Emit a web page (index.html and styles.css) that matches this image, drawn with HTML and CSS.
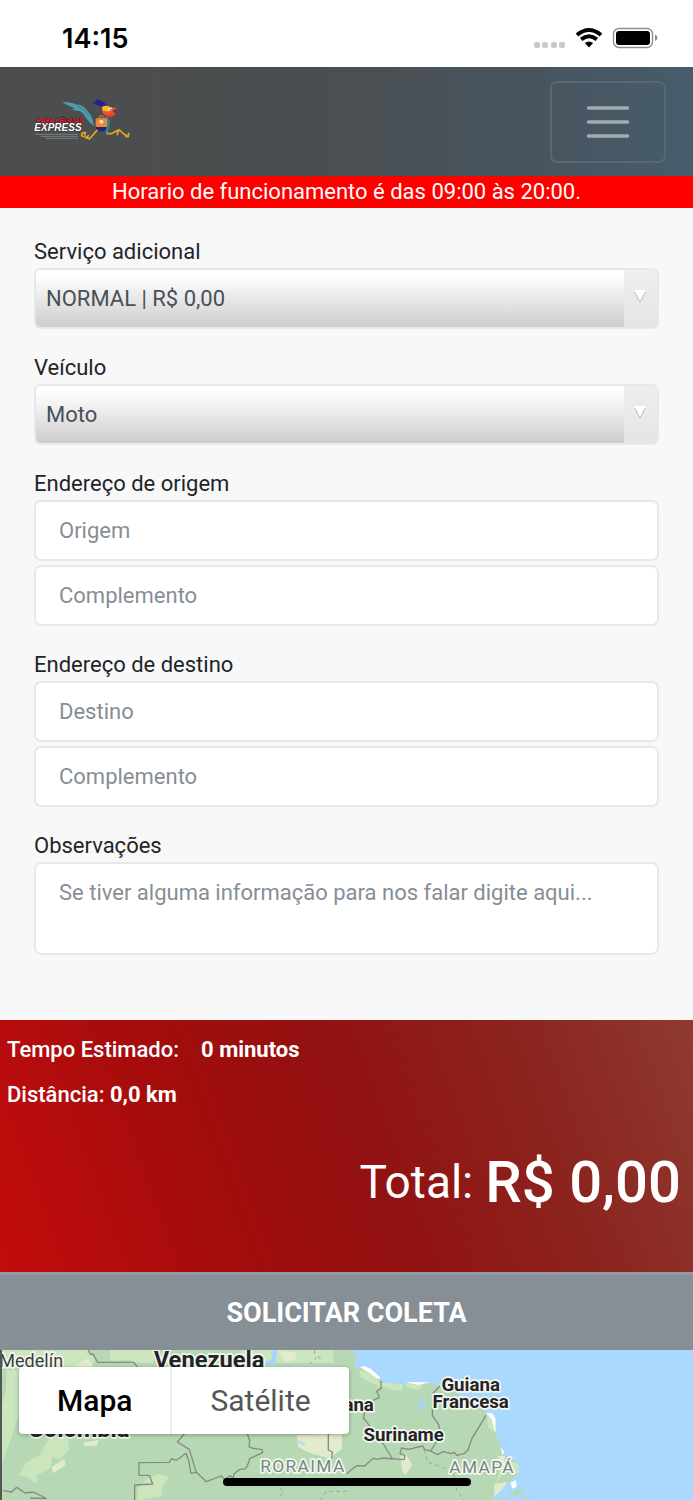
FILE: index.html
```html
<!DOCTYPE html>
<html lang="pt-BR">
<head>
<meta charset="utf-8">
<meta name="viewport" content="width=device-width, initial-scale=1">
<title>Papa Léguas Express</title>
<link rel="stylesheet" href="styles.css">
</head>
<body>
<div class="status">
  <span class="status-time">14:15</span>
  <svg class="status-icons" width="126" height="24" viewBox="0 0 126 24" aria-hidden="true">
    <g fill="#c9c9c9"><rect x="1" y="15" width="6" height="6" rx="2"/><rect x="9" y="15" width="6" height="6" rx="2"/><rect x="18" y="15" width="6" height="6" rx="2"/><rect x="26" y="15" width="6" height="6" rx="2"/></g>
    <g fill="none" stroke="#000" stroke-width="4"><path d="M44 8Q56 -2 68 8"/><path d="M48.200 12.400Q56 6 63.800 12.400"/></g>
    <path d="M51.800 16Q56 12.800 60.200 16L56 20.600Z"/>
    <rect x="80.500" y="1.500" width="39" height="19" rx="5.500" fill="none" stroke="#8e8e8e" stroke-width="1.400"/>
    <rect x="83" y="4" width="34" height="14" rx="3"/>
    <path d="M122 7.500q2.400 1 2.400 3.300t-2.400 3.300z" fill="#8e8e8e"/>
  </svg>
</div>

<header class="navbar">
  <a class="brand" href="#" aria-label="Papa Léguas Express">
    <svg width="100" height="46" viewBox="0 0 300 138">
      <path d="M84 9Q110 8 124 16Q149 17 160 36Q176 50 180 82Q166 71 156 57Q149 42 137 36Q122 37 114 30L124 28Q107 23 84 9Z" fill="#4c9dab"/>
      <path d="M128 19Q149 27 164 50" fill="none" stroke="#347987" stroke-width="3"/>
      <path d="M172 9Q183 11 188 7Q180 1 193 2Q204 3 213 13Q220 17 218 25L207 22Q198 25 191 18Q182 16 172 9Z" fill="#29208a"/>
      <path d="M217 52Q229 57 228 74L222 96L213 96Q220 75 211 55Z" fill="#367f91"/>
      <path d="M204 24Q216 16 229 25L250 27L235 35L244 46L234 53Q215 53 205 41Z" fill="#ee542a"/>
      <path d="M205 23Q218 16 231 25L236 30L223 38L205 34Z" fill="#f5b62a"/>
      <ellipse cx="228" cy="30" rx="6" ry="4" fill="#eee"/><circle cx="230" cy="31" r="2" fill="#222"/>
      <path d="M206 41L220 49L239 46L234 55L218 53Z" fill="#e53720"/>
      <path d="M186 80Q197 87 218 81L215 94Q198 102 186 90Z" fill="#272078"/>
      <path d="M196 59v-7q6-5 11 0v7" fill="none" stroke="#ef8534" stroke-width="3"/>
      <rect x="185" y="58" width="34" height="26" rx="3" fill="#ef8534"/>
      <circle cx="202" cy="68" r="6" fill="#f8e8df"/><path d="M199 70l6-5" stroke="#ef8534" stroke-width="2"/>
      <g fill="none" stroke="#dca923" stroke-width="5" stroke-linecap="round" stroke-linejoin="round"><path d="M189 94L166 120L155 114M155 101Q141 98 143 110L150 113M150 103L154 108M163 110L157 118"/><path d="M219 104L232 104L255 92L268 104L283 113L284 103M283 113L275 112M253 94L250 107"/></g>
      <path d="M216 97l8 7" stroke="#439eac" stroke-width="5"/>
      <text class="logo-top" x="7" y="71">PAPA LÉGUAS</text>
      <text class="logo-bottom" x="1" y="97">EXPRESS</text>
      <path d="M4 106H132M20 112H132M35 118H132" fill="none" stroke="#708086" stroke-width="3"/>
    </svg>
  </a>
  <button class="menu-button" type="button" aria-label="Abrir menu">
    <svg width="44" height="34" viewBox="0 0 44 34"><path d="M2.500 3H41.500M2.500 17H41.500M2.500 31H41.500" stroke="#a3abb2" stroke-width="3.600" stroke-linecap="round"/></svg>
  </button>
</header>

<p class="notice">Horario de funcionamento é das 09:00 às 20:00.</p>

<main>
  <form class="order-form">
    <div class="group">
      <label for="service">Serviço adicional</label>
      <div class="select-box">
        <select id="service"><option>NORMAL | R$ 0,00</option></select>
        <span class="arrow"><svg width="14" height="14" viewBox="0 0 14 14"><path d="M1 2H13L7 13Z" fill="#bdbdbd"/><path d="M1 0H13L7 11Z" fill="#fff"/></svg></span>
      </div>
    </div>
    <div class="group">
      <label for="vehicle">Veículo</label>
      <div class="select-box">
        <select id="vehicle"><option>Moto</option></select>
        <span class="arrow"><svg width="14" height="14" viewBox="0 0 14 14"><path d="M1 2H13L7 13Z" fill="#bdbdbd"/><path d="M1 0H13L7 11Z" fill="#fff"/></svg></span>
      </div>
    </div>
    <div class="group">
      <label for="origin">Endereço de origem</label>
      <div class="fields">
        <input id="origin" type="text" placeholder="Origem">
        <input type="text" placeholder="Complemento" aria-label="Complemento da origem">
      </div>
    </div>
    <div class="group">
      <label for="destination">Endereço de destino</label>
      <div class="fields">
        <input id="destination" type="text" placeholder="Destino">
        <input type="text" placeholder="Complemento" aria-label="Complemento do destino">
      </div>
    </div>
    <div class="group">
      <label for="notes">Observações</label>
      <textarea id="notes" placeholder="Se tiver alguma informação para nos falar digite aqui..."></textarea>
    </div>
  </form>

  <section class="summary">
    <p class="summary-line"><span class="summary-time">Tempo Estimado:</span><strong>0 minutos</strong></p>
    <p class="summary-line">Distância: <strong>0,0 km</strong></p>
    <p class="total"><span>Total:</span><strong>R$ 0,00</strong></p>
  </section>
  <button class="submit" type="button">SOLICITAR COLETA</button>

  <section class="map" aria-label="Mapa">
    <svg class="map-art" viewBox="0 0 2079 450" preserveAspectRatio="xMinYMin slice">
      <rect width="2079" height="450" fill="#a9d9ff"/>
      <path fill="#b7d8b5" d="M0 0H1061L1067 20L1063 54L1090 50L1132 84L1145 96L1220 104L1280 96L1330 110L1400 145L1440 175L1462 190L1485 210L1486 246L1502 290L1516 318L1556 340L1555 370L1530 394L1508 410L1480 442V450H0Z"/>
      <g fill="#cbe6bd">
        <path d="M0 0H260L285 28L270 50H0ZM20 60H58V190L35 260L8 335L0 350V190L18 120ZM145 270L202 250L208 296L180 328L158 320L150 354L110 377L112 403L80 381L56 375L78 338L118 316ZM440 388L475 372L507 381L488 410L484 440L411 450L415 412ZM1130 97L1210 103L1207 122L1176 121L1155 110L1130 110ZM1220 98L1275 96L1255 121L1218 112ZM1079 60L1110 68L1138 92L1125 104L1100 92L1080 80ZM1460 190L1480 208L1488 248L1465 232ZM1508 332L1556 340L1555 372L1515 360L1487 403ZM330 0H460V38H405L391 30L330 32ZM720 0H1000V38H740Z"/>
      </g>
      <g fill="#e3ebcd">
        <path d="M240 38L264 25L280 50H218ZM155 352L193 326L196 346L160 370ZM250 278L296 270L290 287L255 287ZM890 256L1026 252V296L990 325L932 310L895 292ZM835 3L892 8L884 31L855 36ZM1200 321L1216 310L1236 344L1230 356L1215 375L1208 365ZM1495 318L1516 318L1507 367L1495 350ZM1483 402L1522 396L1502 424L1483 438Z"/>
      </g>
      <path d="M1080 52L1092 48L1112 56L1142 84L1132 86L1108 68ZM1218 97L1290 97L1255 104ZM1458 188L1477 190L1487 208L1486 250L1475 208ZM1502 290L1512 306L1508 318ZM1532 398L1548 390L1550 410L1536 416Z" fill="#fff"/>
      <g fill="#b7d8b5"><path d="M1528 427L1550 419L1576 424L1568 435L1532 437ZM1563 442L1590 435L1583 446ZM1490 447L1518 439L1515 450Z"/></g>
      <g fill="#a3d6ff"><path d="M813 2L832 0L826 42L805 46L797 37L816 27ZM890 268L908 278L922 288L909 284L894 274ZM285 397L303 414L295 408ZM210 416L234 436L222 430ZM1260 151L1275 157L1270 172L1259 170L1255 185L1250 181ZM0 188l10 7l-10 8ZM240 424l16 22l-12-12Z"/></g>
      <g fill="none" stroke="#858b84" stroke-width="4" stroke-linejoin="round">
        <path d="M265 0L271 13L279 12L293 37L402 37L414 54M555 250L532 276L568 298L588 365L619 395L663 378L675 388L690 377L700 384L702 371L720 358L734 357L741 350L750 325L788 308L786 299L755 294L747 290L749 271L741 250M10 422L35 426L50 412L75 429L100 426L140 446M90 444L138 446M404 450V405L458 402L448 376H417V338L508 337L514 326L529 331L558 310L566 331L573 370L588 367M985 250V300L997 306L995 326"/>
        <path d="M1143 92L1143 116L1130 124L1138 142L1120 151L1095 183L1090 203L1112 232L1150 282L1178 327L1150 324L1130 328L1120 325L1108 335L1094 348L1072 347L1063 352L1040 371M1320 108L1299 130L1297 196L1316 224L1322 255L1292 303L1274 299L1268 288L1225 298L1205 294L1200 311L1215 316L1212 329L1150 324M1292 303L1312 314L1330 305L1354 311L1364 307L1370 316L1392 311L1404 300L1416 265L1458 196"/>
      </g>
      <g fill="none" stroke="#9da9a0" stroke-width="3" stroke-dasharray="12 9"><path d="M943 0L948 25L930 42M955 18L962 30M1041 424H978L962 450M1272 299L1283 337L1310 346L1342 358M1360 370L1370 420L1391 450M840 412l10 14l-10 12"/></g>
      <g class="map-country">
        <text class="map-large" x="461" y="53">Venezuela</text>
        <text class="map-large" x="85" y="262">Colombia</text>
        <text x="946" y="183">Guiana</text>
        <text x="1412" y="123" text-anchor="middle">Guiana</text>
        <text x="1412" y="174" text-anchor="middle">Francesa</text>
        <text x="1211" y="273" text-anchor="middle">Suriname</text>
      </g>
      <text class="map-city" x="-2" y="50">Medelín</text>
      <g class="map-state"><text x="781" y="366">RORAIMA</text><text x="1348" y="370">AMAPÁ</text></g>
      <path d="M0 0H6V450H0Z" fill="#555"/>
    </svg>
    <div class="map-switch">
      <button class="map-type map-type-active" type="button">Mapa</button>
      <button class="map-type" type="button">Satélite</button>
    </div>
    <span class="home-indicator"></span>
  </section>
</main>
</body>
</html>
```

FILE: styles.css
```css
* { box-sizing: border-box; }

body {
  margin: 0;
  min-height: 100vh;
  display: flex;
  flex-direction: column;
  background: #f8f8f8;
  color: #212529;
  font-family: Roboto, sans-serif;
  font-size: 22px;
  line-height: 32px;
}

p { margin: 0; }

button, input, select, textarea { font: inherit; }

.status {
  display: flex;
  align-items: center;
  justify-content: space-between;
  height: 67px;
  padding: 10px 34px 0 62px;
  background: #fff;
}

.status-time {
  color: #000;
  font-family: Inter, sans-serif;
  font-size: 27px;
  font-weight: 600;
}

.navbar {
  display: flex;
  align-items: center;
  justify-content: space-between;
  height: 109px;
  padding: 0 27px 0 34px;
  background: linear-gradient(to right, #4d4d4d, #4a4e50 45%, #48535c 72%, #475c6b);
}

.brand { display: flex; }

.logo-top, .logo-bottom {
  font-family: "Liberation Sans", sans-serif;
  font-style: italic;
  font-weight: 700;
  paint-order: stroke;
  stroke: #151515;
  stroke-width: 2px;
}

.logo-top { font-size: 20px; fill: #f02430; }
.logo-bottom { font-size: 30px; fill: #fff; }

.menu-button {
  display: flex;
  align-items: center;
  justify-content: center;
  width: 116px;
  height: 82px;
  border: 2px solid #586873;
  border-radius: 7px;
  background: transparent;
}

.notice {
  background: #f00;
  color: #fff;
  text-align: center;
}

main {
  flex: 1;
  display: flex;
  flex-direction: column;
}

.order-form {
  display: flex;
  flex-direction: column;
  gap: 23px;
  padding: 28px 34px 65px;
}

.group, .fields {
  display: flex;
  flex-direction: column;
}

.fields { gap: 4px; }

.fields input, .group textarea, .select-box {
  width: 100%;
  height: 61px;
  border: 2px solid #e7e8e8;
  border-radius: 7px;
  background: #fff;
}

.fields input { padding: 0 23px; }

.group textarea {
  display: block;
  height: 93px;
  padding: 13px 23px;
  resize: none;
}

::placeholder { color: #868e96; opacity: 1; }

.select-box {
  display: flex;
  overflow: hidden;
  position: relative;
}

.select-box select {
  appearance: none;
  width: 100%;
  padding: 0 44px 0 10px;
  border: 0;
  background: linear-gradient(#fff, #fcfcfc 15%, #cdcdcd);
  color: #495057;
}

.arrow {
  position: absolute;
  inset: 0 0 0 auto;
  display: flex;
  align-items: center;
  justify-content: center;
  width: 33px;
  padding: 0 2px 3px 0;
  background: linear-gradient(#eee, #e5e5e5);
  pointer-events: none;
}

.summary {
  min-height: 252px;
  padding: 7px 12px 0 7px;
  background: linear-gradient(70deg, #c40c0c, #a50c0c 28%, #921111 52%, #8b251f 78%, #8f3b2f);
  color: #fff;
}

.summary-line {
  font-weight: 500;
  line-height: 45px;
}

.summary-line strong { font-weight: 700; }
.summary-time { margin-right: 22px; }

.total {
  display: flex;
  align-items: center;
  justify-content: flex-end;
  gap: 12px;
  padding-top: 35px;
  line-height: 60px;
}

.total span { font-size: 46px; }
.total strong { font-size: 58px; font-weight: 500; }

.submit {
  height: 78px;
  padding: 0;
  border: 0;
  border-top: 3px solid #929ba3;
  background: #868e96;
  color: #fff;
  font-size: 27px;
  font-weight: 700;
}

.map {
  position: relative;
  flex: 1;
  min-height: 150px;
  overflow: hidden;
}

.map-art {
  display: block;
  width: 100%;
  height: 100%;
}

.map text { paint-order: stroke; stroke: #f3f8ef; stroke-width: 10px; stroke-linejoin: round; }
.map-country { font-size: 56px; font-weight: 700; fill: #242428; }
.map-large { font-size: 71px; }
.map-city { font-size: 54px; fill: #3c3c3c; }
.map-state { font-size: 52px; letter-spacing: 4px; fill: #778682; }

.map-switch {
  position: absolute;
  top: 17px;
  left: 19px;
  display: flex;
  height: 67px;
  border-radius: 4px;
  background: #fff;
  box-shadow: 0 1px 4px rgba(0, 0, 0, .3);
}

.map-type {
  padding: 0 38px;
  border: 0;
  background: transparent;
  color: #565656;
  font-size: 30px;
}

.map-type-active {
  border-right: 2px solid #eee;
  color: #000;
  font-weight: 500;
}

.home-indicator {
  position: absolute;
  bottom: 14px;
  left: 50%;
  width: 248px;
  height: 8px;
  margin-left: -124px;
  border-radius: 4px;
  background: #000;
}
```
